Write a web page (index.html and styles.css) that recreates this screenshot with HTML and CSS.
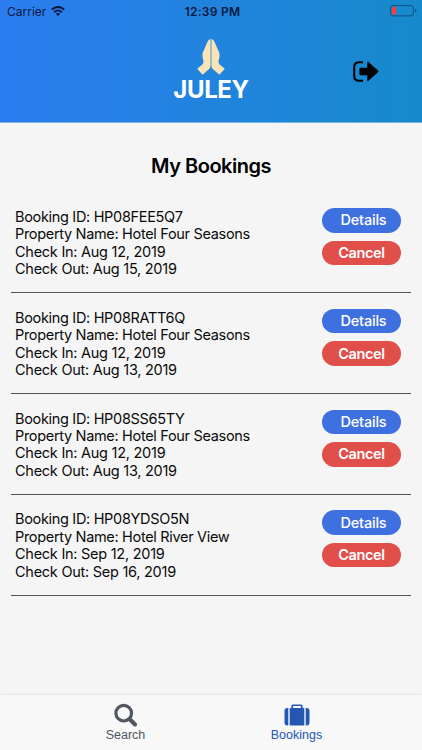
FILE: index.html
```html
<!DOCTYPE html>
<html lang="en">
<head>
<meta charset="utf-8">
<meta name="viewport" content="width=device-width, initial-scale=1">
<title>Juley – My Bookings</title>
<link rel="stylesheet" href="styles.css">
</head>
<body>
<div class="app">
  <header class="header">
    <div class="status">
      <div class="carrier"><span>Carrier</span>
        <svg class="wifi" viewBox="0 0 14 10"><g fill="none" stroke="#07183a" stroke-width="1.9"><path d="M.8 3.6Q7-1.8 13.2 3.6"/><path d="M3.1 6.2Q7 2.7 10.9 6.2"/></g><path d="M4.8 7.8Q7 6.1 9.2 7.8L7 10z" fill="#07183a"/></svg>
      </div>
      <div class="time">12:39 PM</div>
      <svg class="battery" viewBox="0 0 27 12"><rect x=".6" y=".6" width="22.8" height="10.3" rx="2.4" fill="none" stroke="#12507f" stroke-width="1"/><rect x="1.9" y="2" width="4.2" height="7.6" rx="1" fill="#fb3b3c"/><path d="M25 4Q26.6 4.5 26.6 5.8T25 7.6z" fill="#12507f"/></svg>
    </div>
    <div class="brandbar">
      <div class="brand">
        <svg class="hands" viewBox="0 0 28 36"><g fill="#f9e4b7"><path d="M13.600.2C12.300.2 11.400.8 10.800 2.300L6 13Q5.200 15 5.400 17.500L6.500 22Q6.700 24 5.400 25.500L.2 29.800 5.600 35.700 12.700 29.500Q13.600 28.500 13.600 26z"/><path d="M14.400.2C15.700.2 16.600.8 17.200 2.300L22 13Q22.800 15 22.600 17.500L21.500 22Q21.300 24 22.600 25.500L27.800 29.800 22.400 35.700 15.300 29.500Q14.400 28.500 14.400 26z"/></g></svg>
        <div class="name">JULEY</div>
      </div>
      <svg class="logout" viewBox="0 0 26 21"><path d="M10 1.200H6Q1.200 1.200 1.200 6V15Q1.200 19.700 6 19.700H10" fill="none" stroke="#000" stroke-width="2.100"/><path d="M7.500 6.800H14.300V1Q14.500.2 15.300.8L25.200 9.700Q25.800 10.400 25.200 11.100L15.300 20Q14.500 20.600 14.300 19.800V14.300H7.500Q6.400 14.300 6.400 13.200V7.900Q6.400 6.800 7.500 6.800z"/></svg>
    </div>
  </header>
  <main class="content">
    <h1 class="title">My Bookings</h1>
    <section class="booking">
      <div class="info"><div>Booking ID: HP08FEE5Q7</div><div>Property Name: Hotel Four Seasons</div><div class="date">Check In: Aug 12, 2019</div><div class="date">Check Out: Aug 15, 2019</div></div>
      <div class="actions"><button class="btn details">Details</button><button class="btn cancel">Cancel</button></div>
    </section>
    <section class="booking">
      <div class="info"><div>Booking ID: HP08RATT6Q</div><div>Property Name: Hotel Four Seasons</div><div class="date">Check In: Aug 12, 2019</div><div class="date">Check Out: Aug 13, 2019</div></div>
      <div class="actions"><button class="btn details">Details</button><button class="btn cancel">Cancel</button></div>
    </section>
    <section class="booking">
      <div class="info"><div>Booking ID: HP08SS65TY</div><div>Property Name: Hotel Four Seasons</div><div class="date">Check In: Aug 12, 2019</div><div class="date">Check Out: Aug 13, 2019</div></div>
      <div class="actions"><button class="btn details">Details</button><button class="btn cancel">Cancel</button></div>
    </section>
    <section class="booking">
      <div class="info"><div>Booking ID: HP08YDSO5N</div><div>Property Name: Hotel River View</div><div class="date">Check In: Sep 12, 2019</div><div class="date">Check Out: Sep 16, 2019</div></div>
      <div class="actions"><button class="btn details">Details</button><button class="btn cancel">Cancel</button></div>
    </section>
  </main>
  <nav class="tabs">
    <a class="tab"><svg class="search-icon" viewBox="0 0 24 24"><circle cx="9.700" cy="10.200" r="7.800" fill="none" stroke="currentColor" stroke-width="3.200"/><path d="M15.500 16L21 21.500" stroke="currentColor" stroke-width="4" stroke-linecap="round"/></svg><span>Search</span></a>
    <a class="tab active"><svg class="case-icon" viewBox="0 0 26 22"><g fill="currentColor"><path d="M4.300 4V21.500H3.500Q.5 21.500.5 18.500V7Q.5 4 3.500 4zM21.700 4V21.500H22.500Q25.500 21.500 25.500 18.500V7Q25.500 4 22.500 4z"/><path d="M5.700 4H7.400V1.900Q7.400.4 8.900.4H17.100Q18.600.4 18.600 1.900V4H20.300V21.500H5.700zM9.100 4H16.900V2H9.100z" fill-rule="evenodd"/></g></svg><span>Bookings</span></a>
  </nav>
</div>
</body>
</html>
```
FILE: styles.css
```css
* { box-sizing: border-box; }
body { margin: 0; font-family: Inter, "Liberation Sans", sans-serif; color: #0b0b0b; }
.app { width: 422px; height: 750px; display: flex; flex-direction: column; background: #f5f5f5; overflow: hidden; }
.header { height: 123px; background: linear-gradient(90deg, #2c7df0, #168acb); border-bottom: 1px solid #79b3de; }
.status { height: 22px; display: grid; grid-template-columns: 1fr auto 1fr; align-items: center; padding: 0 5px 0 7px; font-size: 12px; color: #07183a; }
.carrier { display: flex; align-items: center; gap: 5px; letter-spacing: 0; }
.wifi { width: 14px; height: 10px; }
.time { font-weight: 600; letter-spacing: .25px; padding-left: 1px; }
.battery { width: 27px; height: 12px; justify-self: end; }
.brandbar { display: grid; grid-template-columns: 1fr auto 1fr; }
.brand { grid-column: 2; display: flex; flex-direction: column; align-items: center; padding-top: 17px; }
.hands { width: 28px; height: 36px; }
.name { color: #fff; font-size: 24px; line-height: 28px; font-weight: 700; letter-spacing: -.4px; margin-top: 1px; }
.logout { width: 26px; height: 21px; margin: 39px 0 0 104px; }
.content { flex: 1; padding: 29px 11px 0; }
.title { margin: 0 0 26px; text-align: center; font-size: 20px; line-height: 28px; font-weight: 600; letter-spacing: -.5px; color: #000; }
.booking { height: 100.8px; display: flex; justify-content: space-between; padding: 2px 10px 0 4px; border-bottom: 1px solid #555; }
.booking:not(:first-of-type) { padding-top: 15.6px; }
.booking:first-of-type { height: 87.2px; }
.info { font-size: 14.5px; line-height: 17.4px; letter-spacing: -.32px; white-space: nowrap; }
.date { letter-spacing: -.26px; }
.actions { display: flex; flex-direction: column; gap: 8px; }
.btn { width: 79px; height: 24.5px; border: 0; border-radius: 13px; padding: 0; color: #fff; font: 500 14.5px/24px Inter, sans-serif; letter-spacing: -.2px; }
.details { background: #3e70e0; padding-left: 4px; }
.cancel { background: #e14f4b; font-weight: 600; letter-spacing: -.35px; }
.tabs { height: 56px; display: grid; grid-template-columns: 1fr 1fr; background: #f8f8f8; border-top: 1px solid #e9e9e9; padding: 0 40px; font: 12.5px/15px "Liberation Sans", sans-serif; box-shadow: 0 -1px 3px #0000000a; }
.tab { display: flex; flex-direction: column; align-items: center; justify-content: flex-end; padding-bottom: 7px; color: #505761; }
.active { color: #2456b2; }
.search-icon { width: 24px; height: 24px; margin-bottom: 1px; }
.case-icon { width: 26px; height: 22px; margin-bottom: 2px; }
```
